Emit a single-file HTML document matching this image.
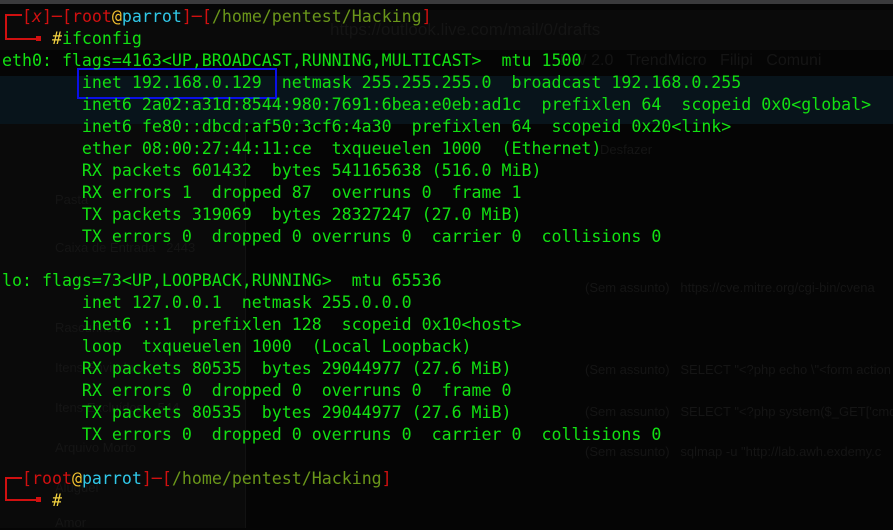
<!DOCTYPE html>
<html><head><meta charset="utf-8"><style>
html,body{margin:0;padding:0;width:893px;height:528px;overflow:hidden;background:#050505;}
.bg{position:absolute;font-family:"Liberation Sans",sans-serif;color:#151515;font-size:13px;white-space:nowrap}
.t{position:absolute;left:2px;top:6px;font-family:"DejaVu Sans Mono","Liberation Mono",monospace;font-size:16.6px;line-height:22px;color:#12e012;white-space:pre;}
.r{color:#d01010}.c{color:#30c8e8}.y{color:#f0c030}.p{color:#6a961a}.w{color:#f0d040}
.red{position:absolute;background:#d01010}
</style></head><body>
<div style="position:absolute;left:0;top:0;width:893px;height:4px;background:#3a3a3c"></div>
<div style="position:absolute;left:0;top:10px;width:893px;height:40px;background:#0a0a0a"></div>
<div style="position:absolute;left:0;top:76px;width:893px;height:48px;background:#08141b"></div>
<div style="position:absolute;left:0;top:124px;width:245px;height:404px;background:#0a0a0a"></div>
<div style="position:absolute;left:245px;top:124px;width:1px;height:404px;background:#121212"></div>
<div class="bg" style="left:330px;top:20px;font-size:17px">https://outlook.live.com/mail/0/drafts</div>
<div class="bg" style="left:560px;top:52px;font-size:16px">DW 2.0 &nbsp; TrendMicro &nbsp; Filipi &nbsp; Comuni</div>
<div class="bg" style="left:55px;top:192px">Pasta</div>
<div class="bg" style="left:55px;top:240px">Caixa de Entrada &nbsp; 2443</div>
<div class="bg" style="left:55px;top:320px">Rascunhos</div>
<div class="bg" style="left:55px;top:360px">Itens Enviados</div>
<div class="bg" style="left:55px;top:400px">Itens Excluídos &nbsp;&nbsp; 544</div>
<div class="bg" style="left:55px;top:440px">Arquivo Morto</div>
<div class="bg" style="left:55px;top:480px">Aluguel</div>
<div class="bg" style="left:55px;top:515px">Amor</div>
<div class="bg" style="left:600px;top:142px">Desfazer</div>
<div class="bg" style="left:585px;top:280px">(Sem assunto) &nbsp; https://cve.mitre.org/cgi-bin/cvena</div>
<div class="bg" style="left:585px;top:362px">(Sem assunto) &nbsp; SELECT "&lt;?php echo \"&lt;form action</div>
<div class="bg" style="left:585px;top:404px">(Sem assunto) &nbsp; SELECT "&lt;?php system($_GET['cmd</div>
<div class="bg" style="left:585px;top:444px">(Sem assunto) &nbsp; sqlmap -u "http://lab.awh.exdemy.c</div>

<div class="red" style="left:5px;top:14px;width:17px;height:2px"></div>
<div class="red" style="left:5px;top:14px;width:2px;height:26px"></div>
<div class="red" style="left:5px;top:38px;width:33px;height:2px"></div>
<div class="red" style="left:36px;top:36px;width:5px;height:5px"></div>
<div class="red" style="left:5px;top:477px;width:17px;height:2px"></div>
<div class="red" style="left:5px;top:477px;width:2px;height:24px"></div>
<div class="red" style="left:5px;top:499px;width:33px;height:2px"></div>
<div class="red" style="left:36px;top:497px;width:5px;height:5px"></div>

<div style="position:absolute;left:77px;top:68px;width:196px;height:27px;border:2px solid #0a10e8"></div>

<div class="t">  <span class="r">[<i>x</i>]─[root</span><span class="y">@</span><span class="c">parrot</span><span class="r">]─[</span><span class="p">/home/pentest/Hacking</span><span class="r">]</span>
     <span class="w">#</span>ifconfig
eth0: flags=4163&lt;UP,BROADCAST,RUNNING,MULTICAST&gt;  mtu 1500
        inet 192.168.0.129  netmask 255.255.255.0  broadcast 192.168.0.255
        inet6 2a02:a31d:8544:980:7691:6bea:e0eb:ad1c  prefixlen 64  scopeid 0x0&lt;global&gt;
        inet6 fe80::dbcd:af50:3cf6:4a30  prefixlen 64  scopeid 0x20&lt;link&gt;
        ether 08:00:27:44:11:ce  txqueuelen 1000  (Ethernet)
        RX packets 601432  bytes 541165638 (516.0 MiB)
        RX errors 1  dropped 87  overruns 0  frame 1
        TX packets 319069  bytes 28327247 (27.0 MiB)
        TX errors 0  dropped 0 overruns 0  carrier 0  collisions 0

lo: flags=73&lt;UP,LOOPBACK,RUNNING&gt;  mtu 65536
        inet 127.0.0.1  netmask 255.0.0.0
        inet6 ::1  prefixlen 128  scopeid 0x10&lt;host&gt;
        loop  txqueuelen 1000  (Local Loopback)
        RX packets 80535  bytes 29044977 (27.6 MiB)
        RX errors 0  dropped 0  overruns 0  frame 0
        TX packets 80535  bytes 29044977 (27.6 MiB)
        TX errors 0  dropped 0 overruns 0  carrier 0  collisions 0

  <span class="r">[root</span><span class="y">@</span><span class="c">parrot</span><span class="r">]─[</span><span class="p">/home/pentest/Hacking</span><span class="r">]</span>
     <span class="w">#</span></div>
</body></html>
